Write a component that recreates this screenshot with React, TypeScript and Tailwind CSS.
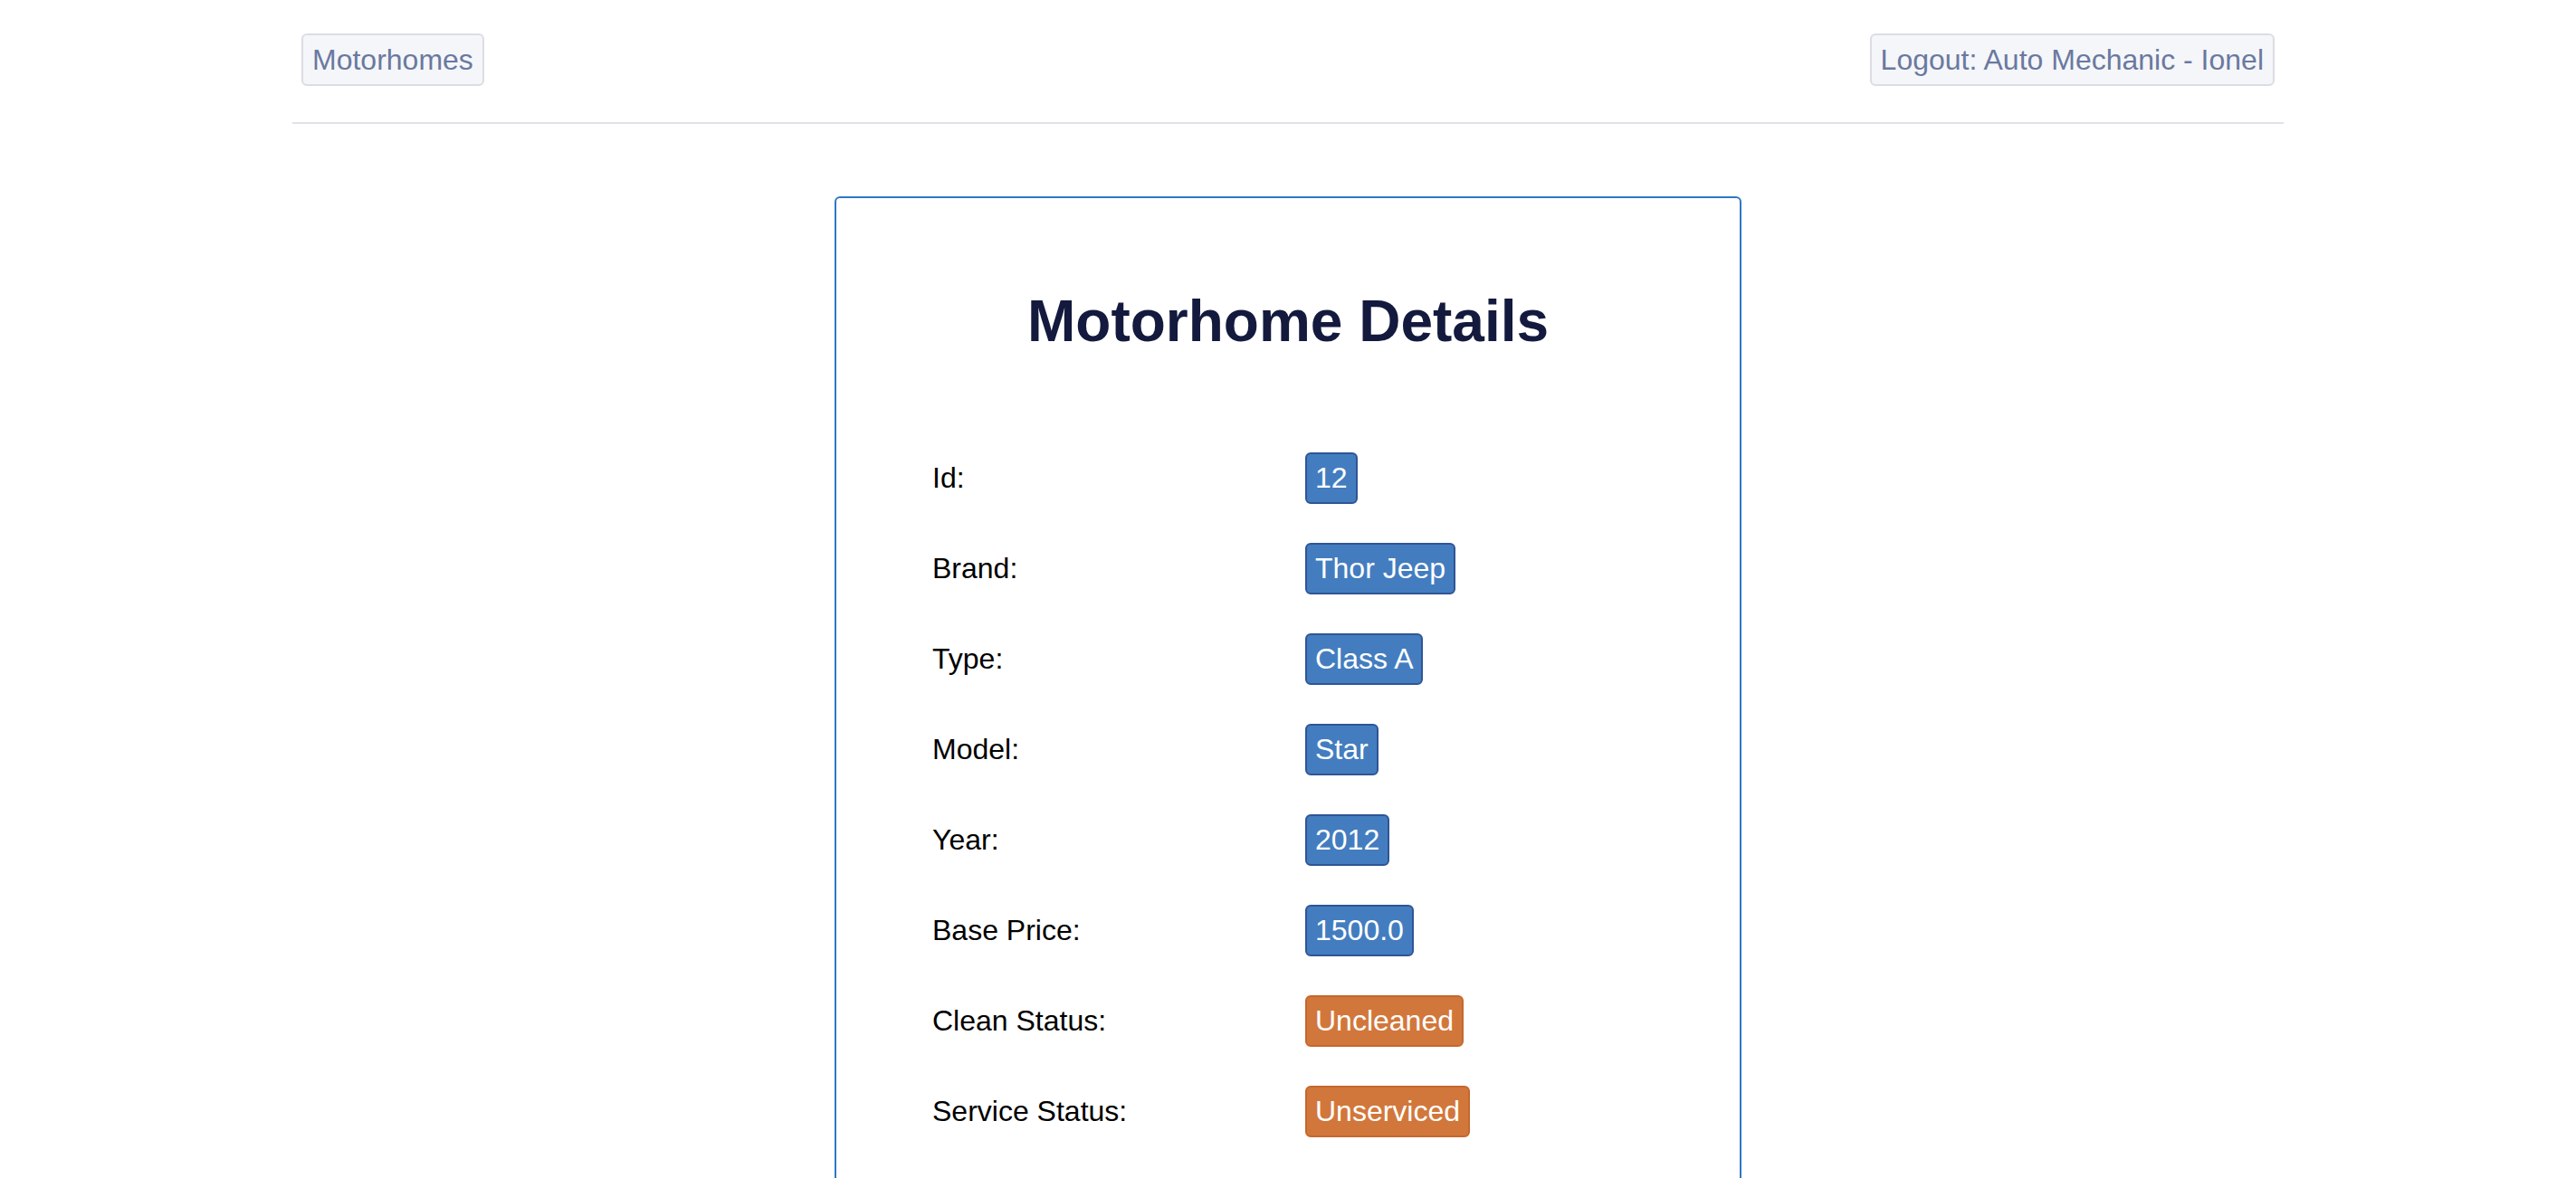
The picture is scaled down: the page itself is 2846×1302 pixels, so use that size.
const details: { label: string; value: string; warn?: boolean }[] = [
  { label: 'Id:', value: '12' },
  { label: 'Brand:', value: 'Thor Jeep' },
  { label: 'Type:', value: 'Class A' },
  { label: 'Model:', value: 'Star' },
  { label: 'Year:', value: '2012' },
  { label: 'Base Price:', value: '1500.0' },
  { label: 'Clean Status:', value: 'Uncleaned', warn: true },
  { label: 'Service Status:', value: 'Unserviced', warn: true },
];

function NavButton({ children }: { children: React.ReactNode }) {
  return (
    <button className="px-[10px] py-2 text-[32px] leading-[38px] text-[#6a79a0] bg-[#f5f6f9] border-2 border-[#dcdde2] rounded-[6px]">
      {children}
    </button>
  );
}

export default function App() {
  return (
    <div className="min-h-screen bg-white font-['Liberation_Sans',Arial,sans-serif]">
      {/* Barra superior */}
      <header className="w-[2200px] mx-auto pt-[37px] border-b-2 border-[#e1e1e7]">
        <div className="flex items-center justify-between px-[10px] pb-[40px]">
          <NavButton>Motorhomes</NavButton>
          <NavButton>Logout: Auto Mechanic - Ionel</NavButton>
        </div>
      </header>

      {/* Tarjeta de detalles */}
      <main className="w-[1002px] mx-auto mt-[80px] border-2 border-[#2f78c4] rounded-[6px] pt-[100px] pb-[120px]">
        <h1 className="text-center text-[64px] leading-[72px] font-bold text-[#131a3d]">
          Motorhome Details
        </h1>

        <div className="mt-[109px] pl-[106px] flex flex-col gap-[43px]">
          {details.map((d) => (
            <div key={d.label} className="flex items-center">
              <span className="w-[412px] text-[32px] leading-[37px] text-black">{d.label}</span>
              <span
                className={`px-[9px] py-2 text-[32px] leading-[37px] text-white border-2 rounded-[6px] ${
                  d.warn ? 'bg-[#d2773b] border-[#c4682e]' : 'bg-[#437dbf] border-[#2f5596]'
                }`}
              >
                {d.value}
              </span>
            </div>
          ))}
        </div>
      </main>
    </div>
  );
}
